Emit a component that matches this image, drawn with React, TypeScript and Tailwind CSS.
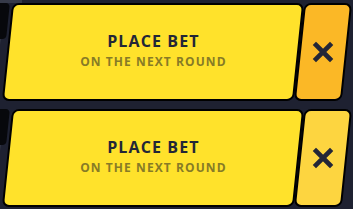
import React from 'react';

const rows = [
  { closeBg: 'bg-[#fbb826]' },
  { closeBg: 'bg-[#fdd540]' },
];

function BetRow({ closeBg }: { closeBg: string }) {
  return (
    <div className="relative h-[98px] flex">
      {/* neighbouring card peeking in on the left */}
      <div className="absolute left-[-24px] top-0 w-[32px] h-[36px] bg-[#07080c] -skew-x-6 rounded-r-[4px]" />
      <div className="absolute left-[-24px] top-[36px] w-[24px] h-[12px] bg-[#3a3e4c] -skew-x-6" />

      <div className="ml-[7px] w-[292px] h-full -skew-x-6 rounded-[7px] border-2 border-black bg-[#ffe22b] flex items-center justify-center">
        <div className="skew-x-6 flex flex-col items-center -mt-[4px]">
          <span className="text-[16px] leading-[20px] font-bold tracking-[0.07em] text-[#222637]">PLACE BET</span>
          <span className="mt-[3px] text-[12px] leading-[16px] font-bold tracking-[0.09em] text-[#877b26]">ON THE NEXT ROUND</span>
        </div>
      </div>
      <div className={`w-[48px] h-full -skew-x-6 rounded-[7px] border-2 border-black ${closeBg} flex items-center justify-center`}>
        <svg width="22" height="22" viewBox="0 0 22 22" className="skew-x-6 -ml-[1px]">
          <path d="M4 4 L18 18 M18 4 L4 18" stroke="#232637" strokeWidth="4.6" strokeLinecap="square" fill="none" />
        </svg>
      </div>
    </div>
  );
}

export default function App() {
  return (
    <div
      className="relative w-[353px] h-[209px] overflow-hidden bg-[#1e2131] flex flex-col gap-[8px] pt-[3px]"
      style={{ fontFamily: '"Open Sans", "Liberation Sans", sans-serif' }}
    >
      <div className="absolute left-0 top-0 w-[22px] h-[3px] bg-[#363a49]" />
      {rows.map((r, i) => (
        <BetRow key={i} closeBg={r.closeBg} />
      ))}
    </div>
  );
}
